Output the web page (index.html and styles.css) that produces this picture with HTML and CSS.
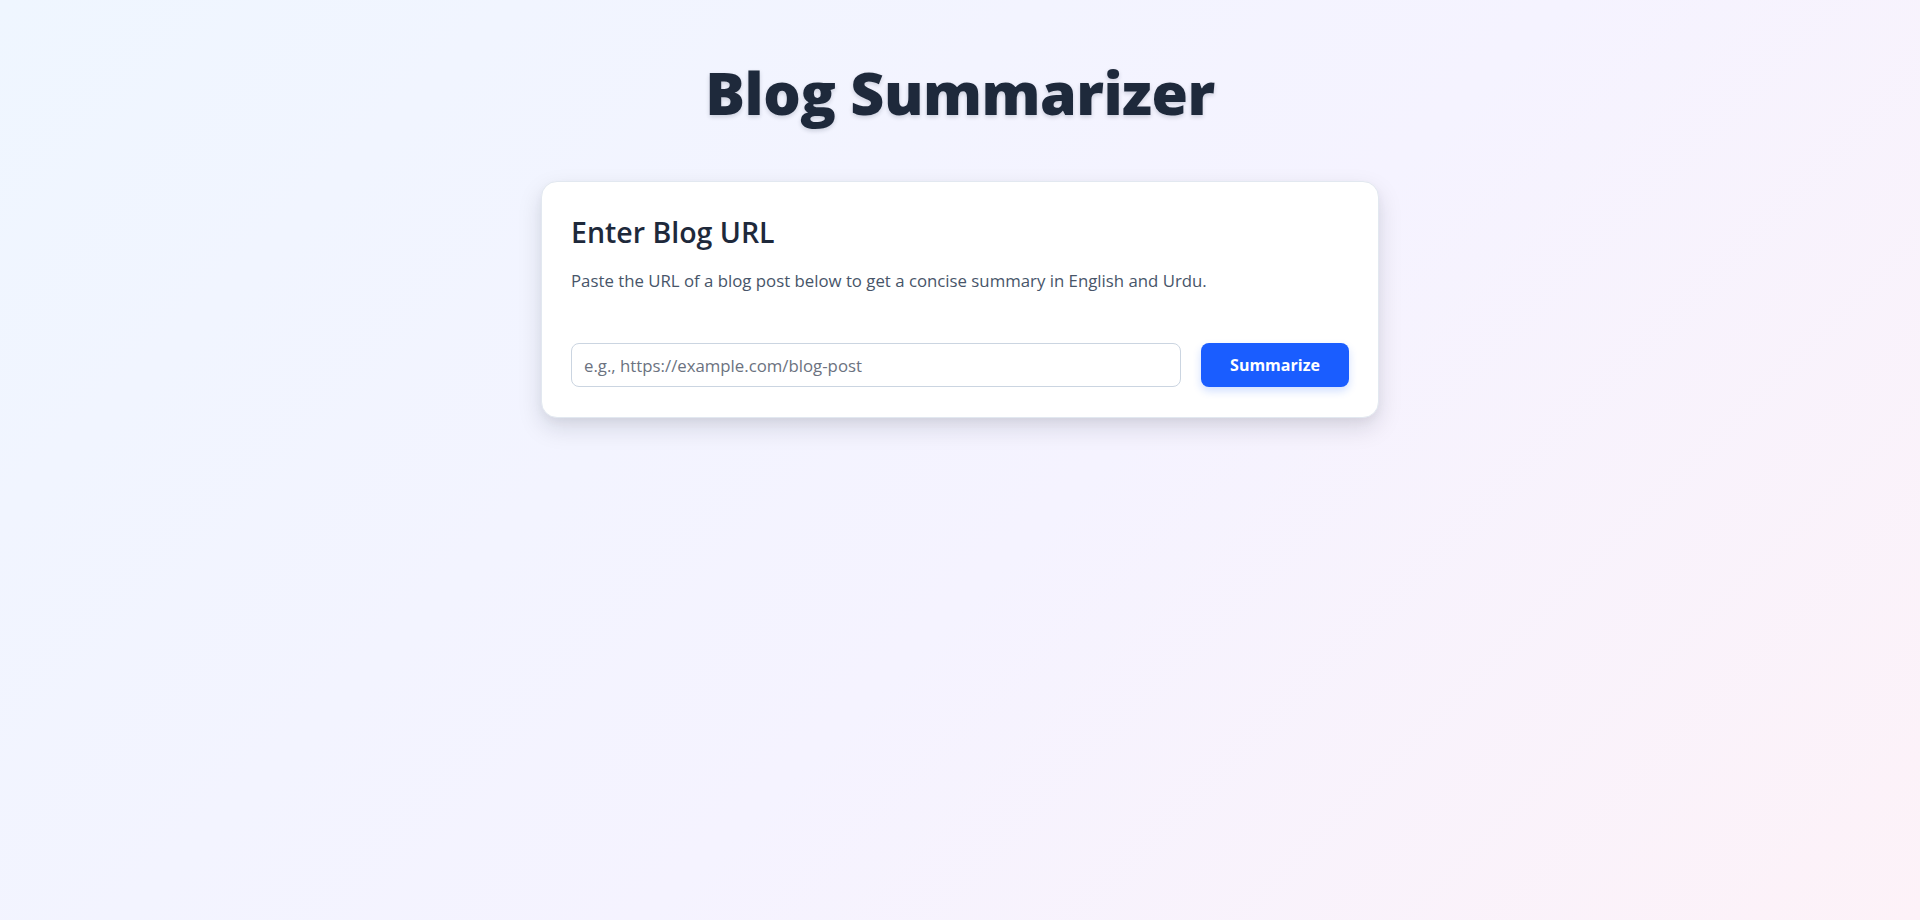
FILE: index.html
```html
<!DOCTYPE html>
<html lang="en">
<head>
<meta charset="utf-8">
<title>Blog Summarizer</title>
<link rel="stylesheet" href="styles.css">
</head>
<body>
<main class="page">
  <h1 class="title">Blog Summarizer</h1>
  <section class="card">
    <h2 class="card-title">Enter Blog URL</h2>
    <p class="card-desc">Paste the URL of a blog post below to get a concise summary in English and Urdu.</p>
    <form class="url-form">
      <input class="url-input" type="text" placeholder="e.g., https://example.com/blog-post">
      <button class="btn" type="button">Summarize</button>
    </form>
  </section>
</main>
</body>
</html>
```
FILE: styles.css
```css
* { box-sizing: border-box; }
html, body { margin: 0; height: 100%; }
body {
  font-family: "Open Sans", "Noto Sans", sans-serif;
  background: linear-gradient(135deg, #eff6ff 0%, #f5f3ff 55%, #fdf2f8 100%);
  color: #1e293b;
  min-height: 920px;
}
.page {
  display: flex;
  flex-direction: column;
  align-items: center;
  padding-top: 50px;
}
.title {
  margin: 0;
  font-size: 59px;
  font-weight: 800;
  line-height: 84px;
  color: #1e293b;
  letter-spacing: -0.5px;
  text-shadow: 0 2px 4px rgba(30, 41, 59, 0.18);
}
.card {
  margin-top: 47px;
  width: 838px;
  background: #ffffff;
  border: 1px solid #e2e8f0;
  border-radius: 16px;
  padding: 33px 29px 30px;
  box-shadow: 0 10px 25px rgba(15, 23, 42, 0.13), 0 4px 8px rgba(15, 23, 42, 0.04);
}
.card-title {
  margin: 0;
  font-size: 28.5px;
  font-weight: 600;
  line-height: 1.2;
  color: #1e293b;
}
.card-desc {
  margin: 20px 0 0;
  font-size: 16.8px;
  line-height: 24px;
  color: #475569;
}
.url-form {
  display: flex;
  gap: 20px;
  margin-top: 50px;
}
.url-input {
  flex: 1;
  height: 44px;
  border: 1px solid #cbd5e1;
  border-radius: 8px;
  padding: 0 12px;
  font-family: inherit;
  font-size: 16.8px;
  color: #1e293b;
  background: #fff;
  outline: none;
}
.url-input::placeholder { color: #6b7280; }
.btn {
  width: 148px;
  height: 44px;
  border: none;
  border-radius: 8px;
  background: #1a5dff;
  color: #ffffff;
  font-family: inherit;
  font-size: 16px;
  font-weight: 700;
  cursor: pointer;
  box-shadow: 0 4px 8px rgba(26, 93, 255, 0.2);
}
```
